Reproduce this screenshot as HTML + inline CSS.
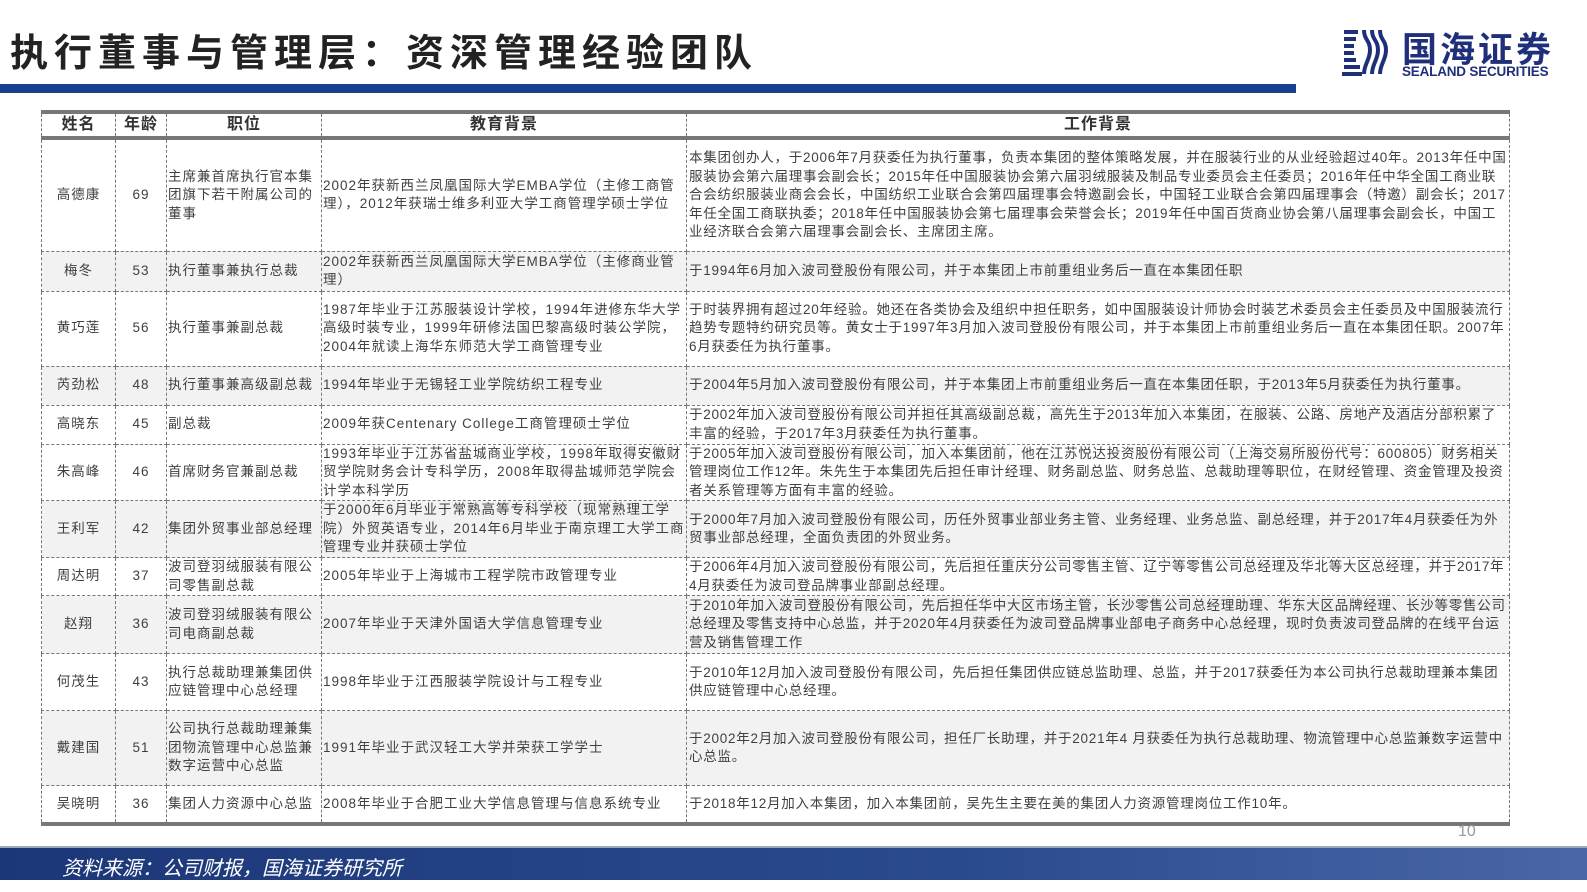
<!DOCTYPE html>
<html><head><meta charset="utf-8">
<style>
*{margin:0;padding:0;box-sizing:border-box}
body{width:1587px;height:892px;background:#fff;position:relative;overflow:hidden;font-family:"Liberation Sans","Noto Sans CJK SC",sans-serif;color:#404040}
.title{position:absolute;left:10px;top:22px;font-size:38px;font-weight:bold;color:#222;letter-spacing:6px;font-family:"Liberation Sans","Noto Sans CJK SC",sans-serif}
.bar{position:absolute;left:0;top:84px;width:1296px;height:9px;background:#17418f}
.logo{position:absolute;left:1340px;top:26px}
.logo .cn{position:absolute;left:62px;top:-4px;font-size:35px;font-weight:bold;color:#1f2f7a;letter-spacing:3px;white-space:nowrap}
.logo .en{position:absolute;left:62px;top:38px;font-size:13.5px;font-weight:bold;color:#1f2f7a;white-space:nowrap;letter-spacing:-0.2px}
table{position:absolute;left:41px;top:110px;width:1468px;border-collapse:collapse;table-layout:fixed;font-size:13.5px;line-height:18.5px;letter-spacing:1px}
td,th{border:1px dashed #777;padding:0 1px;vertical-align:middle}
td:last-child{letter-spacing:0.75px;padding:0 2px}
th{font-weight:bold;font-size:16px;color:#333;height:26px;border-top:4px solid #777;border-bottom:4px solid #777}
td.c{text-align:center}
tr.g td{background:#f2f2f2}
tbody tr:last-child td{border-bottom:4px solid #777}
.pg{position:absolute;left:1458px;top:823px;font-size:16px;color:#999}
.foot{position:absolute;left:0;top:846px;width:1587px;height:34px;background:linear-gradient(90deg,#1c3778,#2a4a8e 60%,#4a66a6);border-top:2px solid #9ab}
.foot span{position:absolute;left:62px;top:4px;font-size:20px;color:#fff;font-style:italic}
</style></head><body>
<div class="title">执行董事与管理层：资深管理经验团队</div>
<div class="bar"></div>
<div class="logo">
<svg width="48" height="52" viewBox="0 0 48 52"><g fill="none" stroke="#1f2f7a" stroke-width="4"><path d="M4 6h14M4 13h12M4 20h10M4 27h10M4 34h12M4 41h16M2 48h20M24 4c0 10 6 10 6 20s-6 14-6 24M32 4c0 10 6 10 6 20s-6 14-6 24M40 4c0 10 6 10 6 20s-6 14-6 24"/></g></svg>
<div class="cn">国海证券</div>
<div class="en">SEALAND SECURITIES</div>
</div>
<table>
<colgroup><col style="width:74px"><col style="width:51px"><col style="width:155px"><col style="width:365px"><col style="width:823px"></colgroup>
<thead><tr><th>姓名</th><th>年龄</th><th>职位</th><th>教育背景</th><th>工作背景</th></tr></thead>
<tbody>
<tr style="height:113px"><td class="c">高德康</td><td class="c">69</td><td>主席兼首席执行官本集团旗下若干附属公司的董事</td><td>2002年获新西兰凤凰国际大学EMBA学位（主修工商管理），2012年获瑞士维多利亚大学工商管理学硕士学位</td><td>本集团创办人，于2006年7月获委任为执行董事，负责本集团的整体策略发展，并在服装行业的从业经验超过40年。2013年任中国服装协会第六届理事会副会长；2015年任中国服装协会第六届羽绒服装及制品专业委员会主任委员；2016年任中华全国工商业联合会纺织服装业商会会长，中国纺织工业联合会第四届理事会特邀副会长，中国轻工业联合会第四届理事会（特邀）副会长；2017年任全国工商联执委；2018年任中国服装协会第七届理事会荣誉会长；2019年任中国百货商业协会第八届理事会副会长，中国工业经济联合会第六届理事会副会长、主席团主席。</td></tr>
<tr class="g" style="height:40px"><td class="c">梅冬</td><td class="c">53</td><td>执行董事兼执行总裁</td><td>2002年获新西兰凤凰国际大学EMBA学位（主修商业管理）</td><td>于1994年6月加入波司登股份有限公司，并于本集团上市前重组业务后一直在本集团任职</td></tr>
<tr style="height:75px"><td class="c">黄巧莲</td><td class="c">56</td><td>执行董事兼副总裁</td><td>1987年毕业于江苏服装设计学校，1994年进修东华大学高级时装专业，1999年研修法国巴黎高级时装公学院，2004年就读上海华东师范大学工商管理专业</td><td>于时装界拥有超过20年经验。她还在各类协会及组织中担任职务，如中国服装设计师协会时装艺术委员会主任委员及中国服装流行趋势专题特约研究员等。黄女士于1997年3月加入波司登股份有限公司，并于本集团上市前重组业务后一直在本集团任职。2007年6月获委任为执行董事。</td></tr>
<tr class="g" style="height:39px"><td class="c">芮劲松</td><td class="c">48</td><td>执行董事兼高级副总裁</td><td>1994年毕业于无锡轻工业学院纺织工程专业</td><td>于2004年5月加入波司登股份有限公司，并于本集团上市前重组业务后一直在本集团任职，于2013年5月获委任为执行董事。</td></tr>
<tr style="height:39px"><td class="c">高晓东</td><td class="c">45</td><td>副总裁</td><td>2009年获Centenary College工商管理硕士学位</td><td>于2002年加入波司登股份有限公司并担任其高级副总裁，高先生于2013年加入本集团，在服装、公路、房地产及酒店分部积累了丰富的经验，于2017年3月获委任为执行董事。</td></tr>
<tr style="height:56px"><td class="c">朱高峰</td><td class="c">46</td><td>首席财务官兼副总裁</td><td>1993年毕业于江苏省盐城商业学校，1998年取得安徽财贸学院财务会计专科学历，2008年取得盐城师范学院会计学本科学历</td><td>于2005年加入波司登股份有限公司，加入本集团前，他在江苏悦达投资股份有限公司（上海交易所股份代号：600805）财务相关管理岗位工作12年。朱先生于本集团先后担任审计经理、财务副总监、财务总监、总裁助理等职位，在财经管理、资金管理及投资者关系管理等方面有丰富的经验。</td></tr>
<tr class="g" style="height:57px"><td class="c">王利军</td><td class="c">42</td><td>集团外贸事业部总经理</td><td>于2000年6月毕业于常熟高等专科学校（现常熟理工学院）外贸英语专业，2014年6月毕业于南京理工大学工商管理专业并获硕士学位</td><td>于2000年7月加入波司登股份有限公司，历任外贸事业部业务主管、业务经理、业务总监、副总经理，并于2017年4月获委任为外贸事业部总经理，全面负责团的外贸业务。</td></tr>
<tr style="height:38px"><td class="c">周达明</td><td class="c">37</td><td>波司登羽绒服装有限公司零售副总裁</td><td>2005年毕业于上海城市工程学院市政管理专业</td><td>于2006年4月加入波司登股份有限公司，先后担任重庆分公司零售主管、辽宁等零售公司总经理及华北等大区总经理，并于2017年4月获委任为波司登品牌事业部副总经理。</td></tr>
<tr class="g" style="height:58px"><td class="c">赵翔</td><td class="c">36</td><td>波司登羽绒服装有限公司电商副总裁</td><td>2007年毕业于天津外国语大学信息管理专业</td><td>于2010年加入波司登股份有限公司，先后担任华中大区市场主管，长沙零售公司总经理助理、华东大区品牌经理、长沙等零售公司总经理及零售支持中心总监，并于2020年4月获委任为波司登品牌事业部电子商务中心总经理，现时负责波司登品牌的在线平台运营及销售管理工作</td></tr>
<tr style="height:57px"><td class="c">何茂生</td><td class="c">43</td><td>执行总裁助理兼集团供应链管理中心总经理</td><td>1998年毕业于江西服装学院设计与工程专业</td><td>于2010年12月加入波司登股份有限公司，先后担任集团供应链总监助理、总监，并于2017获委任为本公司执行总裁助理兼本集团供应链管理中心总经理。</td></tr>
<tr class="g" style="height:75px"><td class="c">戴建国</td><td class="c">51</td><td>公司执行总裁助理兼集团物流管理中心总监兼数字运营中心总监</td><td>1991年毕业于武汉轻工大学并荣获工学学士</td><td>于2002年2月加入波司登股份有限公司，担任厂长助理，并于2021年4 月获委任为执行总裁助理、物流管理中心总监兼数字运营中心总监。</td></tr>
<tr style="height:38px"><td class="c">吴晓明</td><td class="c">36</td><td>集团人力资源中心总监</td><td>2008年毕业于合肥工业大学信息管理与信息系统专业</td><td>于2018年12月加入本集团，加入本集团前，吴先生主要在美的集团人力资源管理岗位工作10年。</td></tr>
</tbody></table>
<div class="pg">10</div>
<div class="foot"><span>资料来源：公司财报，国海证券研究所</span></div>
</body></html>
